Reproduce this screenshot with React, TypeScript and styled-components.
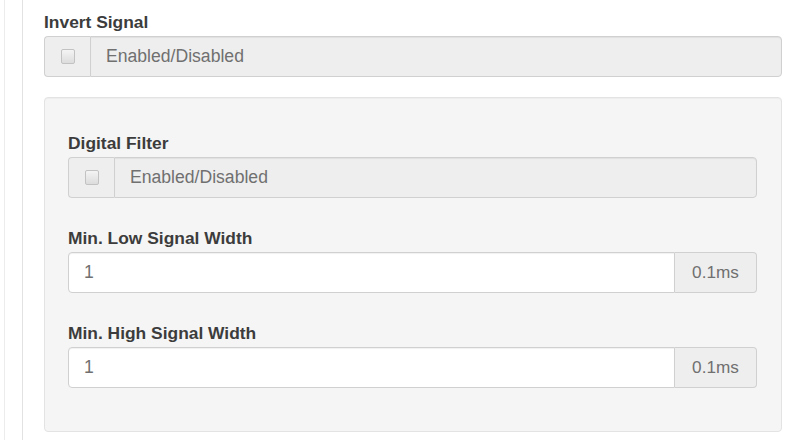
import React from 'react'
import styled, { createGlobalStyle } from 'styled-components'

const GlobalStyle = createGlobalStyle`
  html, body {
    margin: 0;
    padding: 0;
    background: #fff;
  }
  body {
    font-family: "Liberation Sans", Arial, Helvetica, sans-serif;
    color: #333;
  }
`

const Frame = styled.div`
  margin-left: 4px;
  border-left: 1px solid #ececec;
  padding-left: 17px;
  min-height: 440px;
  box-sizing: border-box;
`

const Column = styled.div`
  border-left: 1px solid #e2e2e2;
  padding: 10px 7px 8px 21px;
  min-height: 440px;
  box-sizing: border-box;
`

const FormGroup = styled.div<{ $gap?: number }>`
  display: flex;
  flex-direction: column;
  margin-bottom: ${(p) => p.$gap ?? 0}px;
`

const Label = styled.label`
  font-size: 17.4px;
  font-weight: bold;
  line-height: 25px;
  color: #3c3c3c;
  margin-bottom: 1px;
`

const InputGroup = styled.div`
  display: flex;
  height: 41px;
  box-sizing: border-box;
`

const Addon = styled.span<{ $width: number; $side: 'left' | 'right' }>`
  flex: 0 0 ${(p) => p.$width}px;
  display: flex;
  align-items: center;
  justify-content: center;
  box-sizing: border-box;
  background: #eeeeee;
  border: 1px solid #d0d0d0;
  font-size: 17.2px;
  color: #707070;
  ${(p) =>
    p.$side === 'left'
      ? 'border-radius: 4px 0 0 4px; border-right: none;'
      : 'border-radius: 0 4px 4px 0; border-left: none;'}
`

const Checkbox = styled.input.attrs({ type: 'checkbox' })`
  appearance: none;
  margin: 0;
  width: 14px;
  height: 15px;
  border: 1px solid #c2c2c2;
  border-radius: 2px;
  background: linear-gradient(#f4f4f4, #dcdcdc);
`

const Field = styled.input<{ $disabled?: boolean; $joined: 'left' | 'right' }>`
  flex: 1;
  min-width: 0;
  box-sizing: border-box;
  height: 41px;
  padding: 0 15px;
  font-family: inherit;
  font-size: 17.6px;
  color: #707070;
  background: ${(p) => (p.$disabled ? '#eeeeee' : '#fff')};
  border: 1px solid #d0d0d0;
  box-shadow: inset 0 1px 1px rgba(0, 0, 0, 0.06);
  outline: none;
  border-radius: ${(p) => (p.$joined === 'left' ? '0 4px 4px 0' : '4px 0 0 4px')};
`

const Well = styled.div`
  background: #f5f5f5;
  border: 1px solid #e3e3e3;
  border-radius: 4px;
  padding: 33px 24px 43px 23px;
  box-shadow: inset 0 1px 1px rgba(0, 0, 0, 0.03);
`

const ToggleGroup = ({ label, gap }: { label: string; gap?: number }) => (
  <FormGroup $gap={gap}>
    <Label>{label}</Label>
    <InputGroup>
      <Addon $width={46} $side="left">
        <Checkbox readOnly />
      </Addon>
      <Field $disabled $joined="left" readOnly value="Enabled/Disabled" />
    </InputGroup>
  </FormGroup>
)

const WidthGroup = ({ label, value, gap }: { label: string; value: string; gap?: number }) => (
  <FormGroup $gap={gap}>
    <Label>{label}</Label>
    <InputGroup>
      <Field $joined="right" readOnly value={value} />
      <Addon $width={82} $side="right">0.1ms</Addon>
    </InputGroup>
  </FormGroup>
)

const App = () => (
  <>
    <GlobalStyle />
    <Frame>
      <Column>
        <ToggleGroup label="Invert Signal" gap={20} />
        <Well>
          <ToggleGroup label="Digital Filter" gap={28} />
          <WidthGroup label="Min. Low Signal Width" value="1" gap={28} />
          <WidthGroup label="Min. High Signal Width" value="1" />
        </Well>
      </Column>
    </Frame>
  </>
)

export default App
